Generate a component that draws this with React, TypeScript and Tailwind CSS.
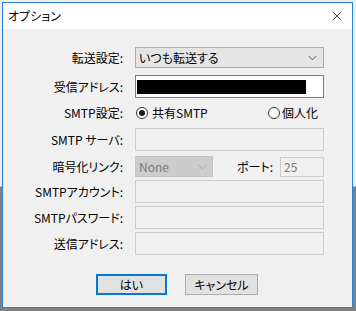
import { X } from "lucide-react";

const font = "[font-family:'Noto_Sans_CJK_JP','Noto_Sans',sans-serif] [font-feature-settings:'palt']";

function Label({ children }: { children: React.ReactNode }) {
  return <div className="w-[120px] shrink-0 whitespace-nowrap text-right text-[12px] leading-none text-black">{children}</div>;
}

function Chevron({ color }: { color: string }) {
  return (
    <svg width="9" height="6" viewBox="0 0 9 6" className="shrink-0">
      <path d="M0.5 0.8 L4.5 4.8 L8.5 0.8" fill="none" stroke={color} strokeWidth="1" />
    </svg>
  );
}

function Field({ h = "h-[23px]" }: { h?: string }) {
  return <div className={`ml-[12px] w-[189px] ${h} border border-[#cccccc] bg-[#f0f0f0]`} />;
}

function Radio({ checked }: { checked?: boolean }) {
  return (
    <span className="flex h-[12px] w-[12px] shrink-0 items-center justify-center rounded-full border border-[#333333] bg-white">
      {checked && <span className="h-[6px] w-[6px] rounded-full bg-[#1a1a1a]" />}
    </span>
  );
}

export default function App() {
  return (
    <div
      className={`h-[311px] w-[356px] overflow-hidden bg-[linear-gradient(to_bottom,#eeeeee_0,#eeeeee_186px,#808080_187px)] pl-[2px] pt-[2px] ${font}`}
    >
      <div className="flex h-[306px] w-[351px] flex-col border border-[#2a80d6] bg-[#f0f0f0]">
        {/* title bar */}
        <div className="flex h-[26px] items-center justify-between bg-white pl-[5px] pr-[8px]">
          <span className="text-[12px] leading-none text-black">オプション</span>
          <X className="h-[14px] w-[14px] text-black" strokeWidth={1.2} />
        </div>

        <div className="flex flex-col pt-[18px]">
          {/* 転送設定 */}
          <div className="flex h-[21px] items-center">
            <Label>転送設定:</Label>
            <div className="ml-[12px] flex h-[21px] w-[189px] items-center justify-between border border-[#adadad] bg-[#e5e5e5] pl-[3px] pr-[6px] text-[12px] text-black">
              <span>いつも転送する</span>
              <Chevron color="#606060" />
            </div>
          </div>

          {/* 受信アドレス */}
          <div className="mt-[7px] flex h-[23px] items-center">
            <Label>受信アドレス:</Label>
            <div className="ml-[12px] flex h-[23px] w-[189px] items-center border border-[#7a7a7a] bg-white pl-[1px]">
              <div className="h-[14px] w-[169px] bg-black" />
            </div>
          </div>

          {/* SMTP設定 */}
          <div className="mt-[5px] flex h-[20px] items-center">
            <Label>SMTP設定:</Label>
            <div className="ml-[12px] flex w-[189px] items-center justify-between pl-[1px] pr-[6px] text-[12px] text-black">
              <span className="flex items-center gap-[4px]">
                <Radio checked />
                共有SMTP
              </span>
              <span className="flex items-center gap-[2px]">
                <Radio />
                個人化
              </span>
            </div>
          </div>

          {/* SMTP サーバ */}
          <div className="mt-[5px] flex h-[23px] items-center">
            <Label>SMTP サーバ:</Label>
            <Field />
          </div>

          {/* 暗号化リンク / ポート */}
          <div className="mt-[5px] flex h-[21px] items-center">
            <Label>暗号化リンク:</Label>
            <div className="ml-[12px] flex h-[21px] w-[78px] shrink-0 items-center justify-between border border-[#c4c4c4] bg-[#cccccc] pl-[3px] pr-[5px] text-[12px] text-[#7a7a7a]">
              <span>None</span>
              <Chevron color="#a8a8a8" />
            </div>
            <div className="w-[60px] shrink-0 whitespace-nowrap text-right text-[12px] leading-none text-black">ポート:</div>
            <div className="ml-[7px] flex h-[20px] w-[44px] shrink-0 items-center border border-[#cccccc] bg-[#f0f0f0] pl-[3px] text-[12px] text-[#7a7a7a]">
              25
            </div>
          </div>

          {/* SMTPアカウント */}
          <div className="mt-[3px] flex h-[23px] items-center">
            <Label>SMTPアカウント:</Label>
            <Field />
          </div>

          {/* SMTPパスワード */}
          <div className="mt-[3px] flex h-[23px] items-center">
            <Label>SMTPパスワード:</Label>
            <Field />
          </div>

          {/* 送信アドレス */}
          <div className="mt-[3px] flex h-[23px] items-center">
            <Label>送信アドレス:</Label>
            <Field />
          </div>

          {/* buttons */}
          <div className="mt-[19px] flex h-[21px] items-center pl-[93px]">
            <button className="flex h-[21px] w-[71px] items-center justify-center border-2 border-[#0078d7] bg-[#e1e1e1] text-[12px] text-black">
              はい
            </button>
            <button className="ml-[18px] flex h-[21px] w-[73px] items-center justify-center border border-[#adadad] bg-[#e1e1e1] text-[12px] text-black">
              キャンセル
            </button>
          </div>
        </div>
      </div>
    </div>
  );
}
